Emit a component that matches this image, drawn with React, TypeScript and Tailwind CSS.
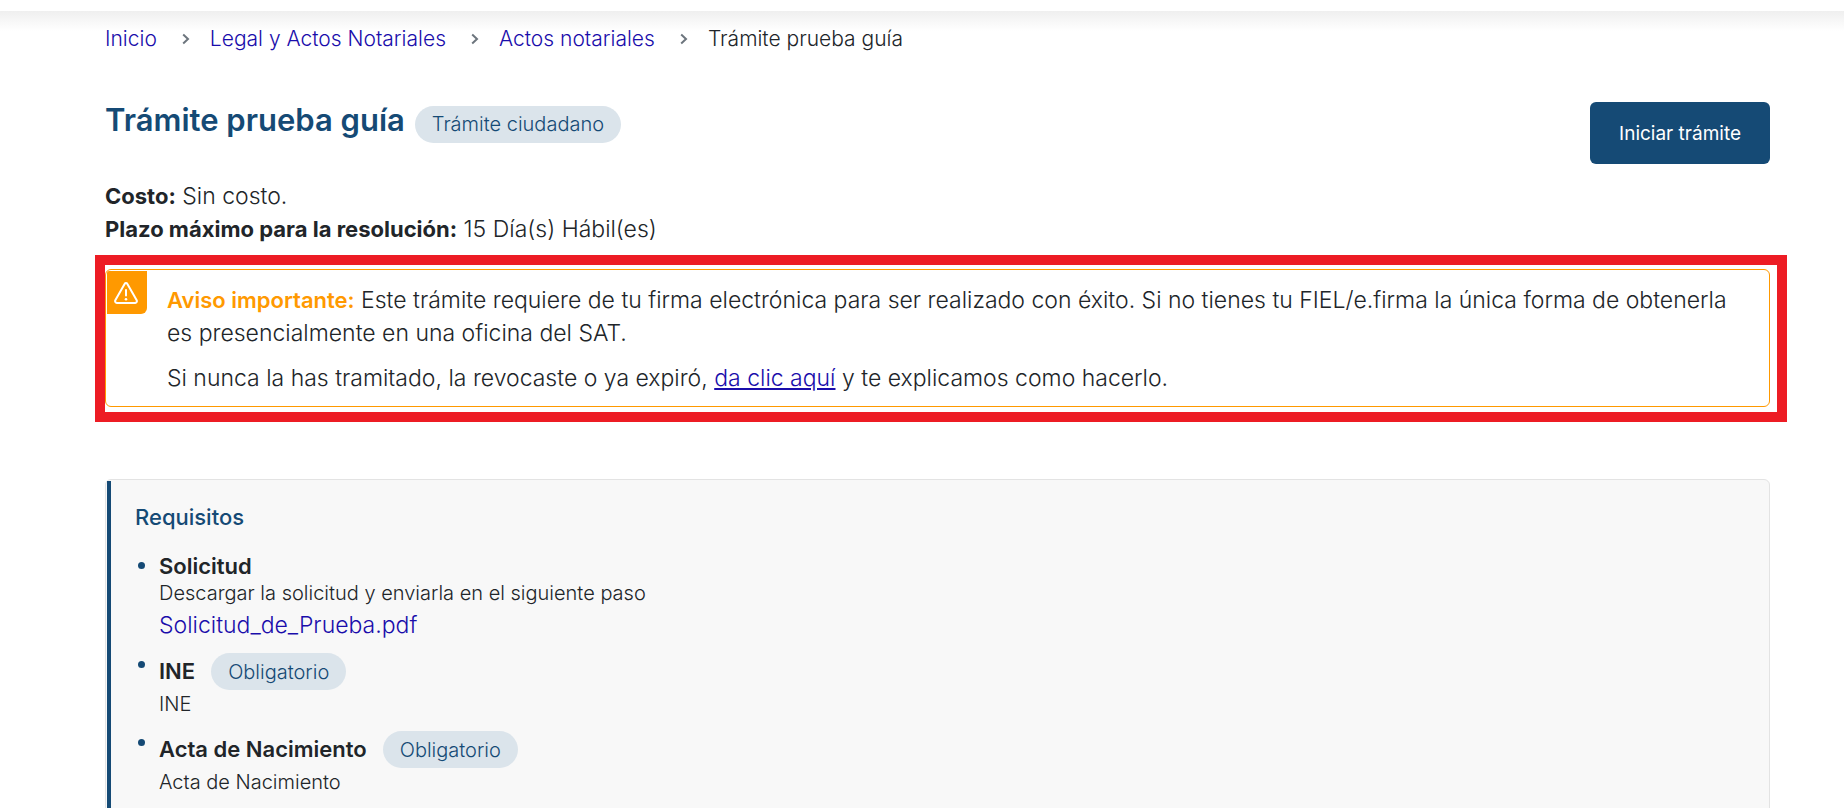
import type { ReactNode } from "react";

const crumbs = ["Inicio", "Legal y Actos Notariales", "Actos notariales"];

function Pill({ children }: { children: ReactNode }) {
  return (
    <span className="inline-flex h-[37px] items-center rounded-full bg-[#dbe4eb] px-[17px] text-[20px] leading-none text-[#154a75]">
      {children}
    </span>
  );
}

function Chevron() {
  return (
    <svg viewBox="0 0 8 12" className="h-3 w-2" fill="none" stroke="#6c757d" strokeWidth="2" aria-hidden="true">
      <path d="M1.2 1.5 6 6 1.2 10.5" />
    </svg>
  );
}

function WarningIcon() {
  return (
    <svg viewBox="0 0 24 22" className="h-[22px] w-6" fill="none" stroke="white" strokeWidth="2" strokeLinecap="round" strokeLinejoin="round" aria-hidden="true">
      <path d="M10.6 1.9 1.3 18.2C.7 19.4 1.5 20.9 2.8 20.9H21.2c1.3 0 2.1-1.5 1.5-2.7L13.4 1.9c-.6-1.1-2.2-1.1-2.8 0Z" />
      <path d="M12 8v5.500" />
      <circle cx="12" cy="17.3" r="1.3" fill="white" stroke="none" />
    </svg>
  );
}

function Requirement({ name, text, required }: { name: string; text: string; required?: boolean }) {
  return (
    <div className="pb-3">
      <div className="flex h-[39px] items-baseline gap-4 pt-px">
        <h3 className="text-[22px] leading-[26px] font-semibold">{name}</h3>
        {required && <Pill>Obligatorio</Pill>}
      </div>
      <p className="text-[20px] leading-[27px]">{text}</p>
    </div>
  );
}

function Bullet() {
  return <span className="mt-[9px] ml-[3px] block size-[7px] shrink-0 rounded-full bg-[#154a75]" />;
}

export default function App() {
  return (
    <div className="h-screen overflow-hidden bg-white font-['Inter',sans-serif] text-[23px] leading-[33px] font-light text-[#212529]">
      <div className="h-[11px] bg-white" />
      <div className="bg-linear-to-b from-[#efefef] to-white to-[20px] pr-[74px] pl-[105px]">
        <nav aria-label="Ruta" className="flex h-[55px] items-center text-[21px] leading-[30px]">
          <ol className="flex">
            {crumbs.map((c) => (
              <li key={c} className="flex items-center">
                <a href="#" className="text-[#1a0dab]">{c}</a>
                <span className="pr-5 pl-[25px]"><Chevron /></span>
              </li>
            ))}
            <li aria-current="page">Trámite prueba guía</li>
          </ol>
        </nav>

        <header className="mt-[35px] flex items-start justify-between">
          <div className="flex items-baseline gap-2.5">
            <h1 className="text-[31px] leading-[37px] font-semibold text-[#154a75]">Trámite prueba guía</h1>
            <Pill>Trámite ciudadano</Pill>
          </div>
          <button type="button" className="mt-px h-[62px] rounded-md bg-[#154a75] px-[29px] text-[19px] font-normal text-white">
            Iniciar trámite
          </button>
        </header>

        <div className="mt-4">
          <p><strong className="text-[22px] font-bold">Costo:</strong> Sin costo.</p>
          <p><strong className="text-[22px] font-bold">Plazo máximo para la resolución:</strong> 15 Día(s) Hábil(es)</p>
        </div>

        <div className="mt-[9px] -mr-[17px] -ml-[10px] border-[10px] border-[#ed1c24] pt-1 pr-[7px] pb-[5px]">
          <section className="flex items-start rounded-md border border-[#ff9900] p-px pb-[11px]">
            <div className="flex h-[43px] w-10 shrink-0 items-center justify-center rounded-tl-xs rounded-br-md bg-[#ff9900] pr-0.5">
              <WarningIcon />
            </div>
            <div className="flex flex-col gap-3 pt-[13px] pr-6 pl-5">
              <p><strong className="text-[22px] font-semibold text-[#ff9900]">Aviso importante:</strong> Este trámite requiere de tu firma electrónica para ser realizado con éxito. Si no tienes tu FIEL/e.firma la única forma de obtenerla es presencialmente en una oficina del SAT.</p>
              <p>Si nunca la has tramitado, la revocaste o ya expiró, <a href="#" className="text-[#1a0dab] underline">da clic aquí</a> y te explicamos como hacerlo.</p>
            </div>
          </section>
        </div>

        <section className="mt-[57px] rounded-md border border-[#e3e3e3] bg-[#f8f8f8] p-px">
          <div className="border-l-4 border-[#154a75] pt-5 pb-20 pl-6">
            <h2 className="text-[22px] leading-[33px] font-medium text-[#154a75]">Requisitos</h2>
            <ul className="mt-[19px]">
              <li className="flex gap-[14px]">
                <Bullet />
                <div className="pb-2">
                  <h3 className="text-[22px] leading-[26px] font-semibold">Solicitud</h3>
                  <p className="text-[20px] leading-[28px]">Descargar la solicitud y enviarla en el siguiente paso</p>
                  <a href="#" className="block leading-[37px] text-[#1a0dab]">Solicitud_de_Prueba.pdf</a>
                </div>
              </li>
              <li className="flex gap-[14px]">
                <Bullet />
                <Requirement name="INE" text="INE" required />
              </li>
              <li className="flex gap-[14px]">
                <Bullet />
                <Requirement name="Acta de Nacimiento" text="Acta de Nacimiento" required />
              </li>
            </ul>
          </div>
        </section>
      </div>
    </div>
  );
}
